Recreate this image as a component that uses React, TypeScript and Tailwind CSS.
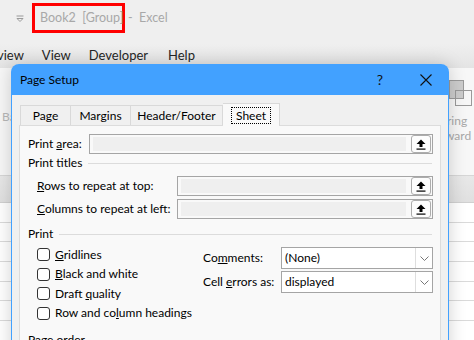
import React from "react";

function UpButton() {
  return (
    <div className="w-[20px] h-[18px] rounded-[3px] border border-[#adadad] bg-[#fdfdfd] flex items-center justify-center">
      <svg width="10" height="11" viewBox="0 0 10 11">
        <path d="M5 0.5 L9.5 5 L6.5 5 L6.5 8 L3.5 8 L3.5 5 L0.5 5 Z" fill="#000" />
        <rect x="0.5" y="9.5" width="9" height="1.2" fill="#000" />
      </svg>
    </div>
  );
}

function RefInput() {
  return (
    <div className="flex-1 h-[20px] border border-[#a5a5a5] bg-[#f9f9f9] flex items-center pl-[3px] pr-[1px] gap-[5px]">
      <div className="flex-1 h-[14px] bg-[#efefef]"></div>
      <UpButton />
    </div>
  );
}

function Select({ value }: { value: string }) {
  return (
    <div className="w-[152px] h-[22px] border border-[#a5a5a5] bg-white flex items-center">
      <span className="flex-1 pl-[3px] text-[12px] text-black">{value}</span>
      <div className="w-[17px] h-full border-l border-[#dedede] flex items-center justify-center">
        <svg width="9" height="5" viewBox="0 0 9 5">
          <path d="M0.5 0.5 L4.5 4.5 L8.5 0.5" stroke="#777" strokeWidth="1" fill="none" />
        </svg>
      </div>
    </div>
  );
}

function Group({ title }: { title: string }) {
  return (
    <div className="flex items-center h-[20px] pl-[8px] pr-[8px]">
      <span className="text-[12px] text-black whitespace-nowrap">{title}</span>
      <div className="flex-1 h-px bg-[#dcdcdc] ml-[6px]"></div>
    </div>
  );
}

function Check({ children }: { children: React.ReactNode }) {
  return (
    <div className="flex items-center h-[19.5px] gap-[5px]">
      <div className="w-[13px] h-[13px] rounded-[3px] border border-[#333] bg-white"></div>
      <span className="text-[12px] text-black whitespace-nowrap">{children}</span>
    </div>
  );
}

export default function App() {
  return (
    <div className="relative w-[474px] h-[340px] overflow-hidden bg-[#efefef] font-['Lato',sans-serif]">
      {/* Title bar */}
      <div className="h-[44px] flex items-start pt-[3px]">
        <svg className="ml-[16px] mt-[12px]" width="8" height="7" viewBox="0 0 8 7">
          <rect x="0.5" y="0.5" width="7" height="1" fill="#9a9a9a" />
          <path d="M1 3.5 L4 6.5 L7 3.5 Z" fill="none" stroke="#9a9a9a" strokeWidth="1" />
        </svg>
        <div className="ml-[8px] h-[30px] w-[93px] border-[3px] border-[#ff0000] flex items-center pl-[5px]">
          <span className="text-[12.5px] text-[#a8a8a8] whitespace-nowrap">Book2&nbsp; [Group]</span>
        </div>
        <span className="ml-[3px] h-[30px] leading-[30px] text-[12.5px] text-[#a8a8a8] whitespace-nowrap">-&nbsp; Excel</span>
      </div>

      {/* Ribbon tabs */}
      <div className="h-[24px] flex items-center text-[13px] text-[#262626] bg-gradient-to-b from-[#efefef] to-[#e4e4e4]">
        <span className="ml-[-3px]">view</span>
        <span className="ml-[18px]">View</span>
        <span className="ml-[18px]">Developer</span>
        <span className="ml-[20px]">Help</span>
      </div>

      {/* Ribbon */}
      <div className="h-[108px] bg-[#f7f7f7] border-b border-[#d6d6d6] flex justify-between">
        <span className="mt-[40px] ml-[2px] text-[12px] text-[#b8b8b8]">Ba</span>
        <div className="w-[26px] flex flex-col">
          <div className="relative h-[34px] mt-[11px]">
            <div className="absolute left-[1px] top-[1px] w-[15px] h-[19px] bg-[#cccccc] border border-[#9a9a9a]"></div>
            <div className="absolute left-[7px] top-[11px] w-[17px] h-[16px] border border-[#9a9a9a]"></div>
          </div>
          <span className="text-[12px] leading-[15px] text-[#a8a8a8] -ml-[1px] whitespace-nowrap">ring</span>
          <span className="text-[12px] leading-[15px] text-[#a8a8a8] -ml-[3px] whitespace-nowrap">ward</span>
        </div>
      </div>

      {/* Column header */}
      <div className="h-[27px] bg-gradient-to-b from-[#e8e8e8] to-[#e0e0e0] border-b border-[#d0d0d0]"></div>

      {/* Sheet rows */}
      <div className="bg-white">
        {Array.from({ length: 8 }).map((_, i) => (
          <div key={i} className="h-[19.7px] border-b border-[#dadada]"></div>
        ))}
      </div>

      {/* Page Setup dialog */}
      <div className="absolute left-[11px] top-[64px] w-[438px] h-[300px] shadow-[0_0_18px_rgba(0,0,0,0.18)] rounded-t-[8px] flex flex-col">
        <div className="h-[31px] bg-[#42a1ff] rounded-t-[8px] flex items-center pl-[9px]">
          <span className="text-[12px] text-black flex-1">Page Setup</span>
          <span className="text-[14px] text-[#111] w-[20px] text-center mr-[30px]">?</span>
          <svg className="mr-[17px]" width="12" height="12" viewBox="0 0 12 12">
            <path d="M0.5 0.5 L11.5 11.5 M11.5 0.5 L0.5 11.5" stroke="#111" strokeWidth="1.1" />
          </svg>
        </div>
        <div className="flex-1 bg-[#f0f0f0] border-x border-[#42a1ff] pt-[7px] px-[7px]">
          {/* Tabs */}
          <div className="flex items-end h-[23px] pl-[1px]">
            <div className="h-[20px] w-[51px] border border-b-0 border-[#d9d9d9] flex items-center justify-center text-[12px] text-black">Page</div>
            <div className="h-[20px] w-[60px] border border-l-0 border-b-0 border-[#d9d9d9] flex items-center justify-center text-[12px] text-black">Margins</div>
            <div className="h-[20px] w-[92px] border border-l-0 border-b-0 border-[#d9d9d9] flex items-center justify-center text-[12px] text-black">Header/Footer</div>
            <div className="relative z-10 h-[23px] w-[57px] -mb-px border border-l-0 border-b-0 border-[#d9d9d9] bg-[#f9f9f9] flex items-center justify-center">
              <span className="text-[12px] text-black leading-[15px] px-[4px] border border-dotted border-black">Sheet</span>
            </div>
          </div>

          {/* Panel */}
          <div className="h-[230px] border border-[#dcdcdc] bg-[#f9f9f9] pt-[8px]">
            <div className="flex items-center pl-[8px] pr-[7px]">
              <span className="w-[61px] text-[12px] text-black whitespace-nowrap">Print <u>a</u>rea:</span>
              <RefInput />
            </div>
            <div className="mt-[-1px]">
              <Group title="Print titles" />
            </div>
            <div className="flex items-center pl-[17px] pr-[7px] mt-[3px]">
              <span className="w-[140px] text-[12px] text-black whitespace-nowrap"><u>R</u>ows to repeat at top:</span>
              <RefInput />
            </div>
            <div className="flex items-center pl-[17px] pr-[7px] mt-[3px]">
              <span className="w-[140px] text-[12px] text-black whitespace-nowrap"><u>C</u>olumns to repeat at left:</span>
              <RefInput />
            </div>
            <div className="mt-[5px]">
              <Group title="Print" />
            </div>
            <div className="flex pl-[17px] pr-[7px] mt-[1px]">
              <div className="w-[167px] flex flex-col">
                <Check><u>G</u>ridlines</Check>
                <Check><u>B</u>lack and white</Check>
                <Check>Draft <u>q</u>uality</Check>
                <Check>Row and co<u>l</u>umn headings</Check>
              </div>
              <div className="flex-1 flex flex-col pt-[2px] gap-[2px]">
                <div className="flex items-center">
                  <span className="w-[78px] text-[12px] text-black">Co<u>m</u>ments:</span>
                  <Select value="(None)" />
                </div>
                <div className="flex items-center">
                  <span className="w-[78px] text-[12px] text-black">Cell <u>e</u>rrors as:</span>
                  <Select value="displayed" />
                </div>
              </div>
            </div>
            <div className="mt-[7px]">
              <Group title="Page order" />
            </div>
          </div>
        </div>
      </div>
    </div>
  );
}
